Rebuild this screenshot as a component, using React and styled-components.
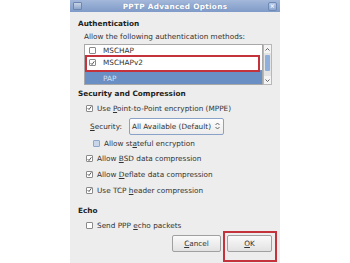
import React from 'react'
import styled, { createGlobalStyle } from 'styled-components'

const Global = createGlobalStyle`
  html, body { margin: 0; padding: 0; background: #fff; }
  body { font-family: "DejaVu Sans", Verdana, sans-serif; font-size: 7.3px; color: #2e2e2e; }
`

const Page = styled.div`
  width: 350px;
  height: 263px;
  display: flex;
  justify-content: center;
  overflow: hidden;
`

const Dialog = styled.div`
  width: 210px;
  height: 263px;
  background: #ededed;
  display: flex;
  flex-direction: column;
`

const TitleBar = styled.div`
  height: 12px;
  background: linear-gradient(#a3b8da, #7f9bc8);
  display: flex;
  align-items: center;
  padding: 0 3px;
  color: #fff;
  font-weight: bold;
  letter-spacing: 0.3px;
`

const Title = styled.div`
  flex: 1;
  text-align: center;
  text-shadow: 0 0 1px rgba(70, 90, 130, 0.5);
`

const WinIcon = styled.div`
  width: 9px;
  height: 8px;
  border-radius: 1px;
  background: linear-gradient(#c8d4e6, #8ea6cb);
  border: 1px solid #6d86b0;
  box-sizing: border-box;
`

const CloseBtn = styled.div`
  width: 9px;
  height: 9px;
  border: 1px solid #6f89b5;
  border-radius: 2px;
  background: linear-gradient(#b5c7e3, #8ea8d0);
  box-sizing: border-box;
  display: flex;
  align-items: center;
  justify-content: center;
  font-size: 6px;
  line-height: 1;
`

const Body = styled.div`
  flex: 1;
  padding: 6px 8px 0 8px;
  display: flex;
  flex-direction: column;
`

const Heading = styled.div`
  font-weight: bold;
  height: 12px;
  line-height: 12px;
  margin-top: ${p => p.$mt || 0}px;
  color: #222;
`

const Label = styled.div`
  height: 12px;
  line-height: 12px;
  padding-left: ${p => p.$indent || 0}px;
  margin-top: ${p => p.$mt || 0}px;
  color: #333;
`

const ListWrap = styled.div`
  margin: 1px 0 0 6px;
  display: flex;
  height: 41px;
`

const List = styled.div`
  width: 179px;
  border: 1px solid #a8a8a8;
  background: #fff;
  overflow: hidden;
  position: relative;
  box-sizing: border-box;
`

const ListRow = styled.div`
  height: ${p => p.$h}px;
  flex: none;
  display: flex;
  align-items: center;
  padding-left: 4px;
  gap: 7px;
  background: ${p => (p.$sel ? '#6a8fc4' : '#fff')};
  color: ${p => (p.$sel ? '#d6e0f0' : '#333')};
`

const Highlight = styled.div`
  position: absolute;
  left: 0;
  top: 10px;
  width: 175px;
  height: 17px;
  border: 2px solid #c4323c;
  box-sizing: border-box;
`

const Scroll = styled.div`
  width: 9px;
  display: flex;
  flex-direction: column;
  background: #e4e4e4;
  border: 1px solid #b8b8b8;
  box-sizing: border-box;
`

const ScrollBtn = styled.div`
  height: 8px;
  background: #f4f4f4;
  display: flex;
  align-items: center;
  justify-content: center;
`

const Thumb = styled.div`
  margin: 2px 1px;
  height: 16px;
  background: #8fb0dc;
  border-radius: 1px;
`

const Spacer = styled.div`
  flex: 1;
`

const Box = styled.div`
  width: 7px;
  height: 7px;
  border: 1px solid ${p => (p.$dim ? '#8ea6cb' : '#8a8a8a')};
  background: ${p => (p.$dim ? '#c9d6ea' : '#fff')};
  border-radius: 1px;
  box-sizing: border-box;
  flex: none;
  display: flex;
  align-items: center;
  justify-content: center;
`

const CheckRow = styled.div`
  height: ${p => p.$h || 15}px;
  display: flex;
  align-items: center;
  gap: 4px;
  padding-left: ${p => p.$indent || 8}px;
  color: #333;
`

const U = styled.span`
  text-decoration: underline;
  text-underline-offset: 1px;
`

const PapText = styled.span`
  padding-left: 14px;
`

const SecRow = styled.div`
  height: 18px;
  display: flex;
  align-items: center;
  padding-left: 12px;
  gap: 7px;
  margin-top: 1px;
`

const Combo = styled.div`
  width: 95px;
  height: 17px;
  border: 1px solid #8aa2c8;
  border-radius: 2px;
  background: linear-gradient(#fdfdfd, #ececec);
  box-sizing: border-box;
  display: flex;
  align-items: center;
  justify-content: space-between;
  padding: 0 3px 0 2px;
  white-space: nowrap;
  color: #333;
`

const Buttons = styled.div`
  display: flex;
  justify-content: flex-end;
  gap: 2px;
  margin-top: 2px;
`

const Button = styled.div`
  width: ${p => p.$w}px;
  height: 17px;
  border: 1px solid #a0a0a0;
  border-radius: 2px;
  background: linear-gradient(#fafafa, #e2e2e2);
  box-sizing: border-box;
  display: flex;
  align-items: center;
  justify-content: center;
  color: #333;
`

const OkFrame = styled.div`
  border: 2px solid #c4323c;
  padding: 2px 3px 8px 2px;
  margin-top: -4px;
  margin-right: -5px;
`

const Tick = () => (
  <svg width="6" height="6" viewBox="0 0 6 6">
    <path d="M0.8 3.2 L2.4 4.8 L5.2 1" fill="none" stroke="#333" strokeWidth="1" />
  </svg>
)

const Arrow = ({ up }) => (
  <svg width="5" height="3" viewBox="0 0 5 3">
    <path d={up ? 'M0.5 2.5 L2.5 0.5 L4.5 2.5' : 'M0.5 0.5 L2.5 2.5 L4.5 0.5'} fill="none" stroke="#555" strokeWidth="0.9" />
  </svg>
)

const UpDown = () => (
  <svg width="5" height="8" viewBox="0 0 5 8">
    <path d="M0.5 3 L2.5 1 L4.5 3 M0.5 5 L2.5 7 L4.5 5" fill="none" stroke="#555" strokeWidth="0.9" />
  </svg>
)

const Check = ({ on, dim, indent, h, children }) => (
  <CheckRow $indent={indent} $h={h}>
    <Box $dim={dim}>{on && <Tick />}</Box>
    <span>{children}</span>
  </CheckRow>
)

export default function App() {
  return (
    <Page>
      <Global />
      <Dialog>
        <TitleBar>
          <WinIcon />
          <Title>PPTP Advanced Options</Title>
          <CloseBtn>×</CloseBtn>
        </TitleBar>
        <Body>
          <Heading>Authentication</Heading>
          <Label $indent={6} $mt={1}>Allow the following authentication methods:</Label>
          <ListWrap>
            <List>
              <ListRow $h={10}>
                <Box />
                <span>MSCHAP</span>
              </ListRow>
              <ListRow $h={15}>
                <Box><Tick /></Box>
                <span>MSCHAPv2</span>
              </ListRow>
              <ListRow $h={16} $sel>
                <PapText>PAP</PapText>
              </ListRow>
              <Highlight />
            </List>
            <Scroll>
              <ScrollBtn><Arrow up /></ScrollBtn>
              <Thumb />
              <Spacer />
              <ScrollBtn><Arrow /></ScrollBtn>
            </Scroll>
          </ListWrap>
          <Heading $mt={3}>Security and Compression</Heading>
          <Check on h={16}>Use <U>P</U>oint-to-Point encryption (MPPE)</Check>
          <SecRow>
            <span><U>S</U>ecurity:</span>
            <Combo>
              <span>All Available (Default)</span>
              <UpDown />
            </Combo>
          </SecRow>
          <Check dim indent={15} h={16}>Allow st<U>a</U>teful encryption</Check>
          <Check on>Allow <U>B</U>SD data compression</Check>
          <Check on h={16}>Allow <U>D</U>eflate data compression</Check>
          <Check on h={16}>Use TCP <U>h</U>eader compression</Check>
          <Heading $mt={7}>Echo</Heading>
          <Check h={16}>Send PPP <U>e</U>cho packets</Check>
          <Buttons>
            <Button $w={49}><span><U>C</U>ancel</span></Button>
            <OkFrame>
              <Button $w={45}><span><U>O</U>K</span></Button>
            </OkFrame>
          </Buttons>
        </Body>
      </Dialog>
    </Page>
  )
}
